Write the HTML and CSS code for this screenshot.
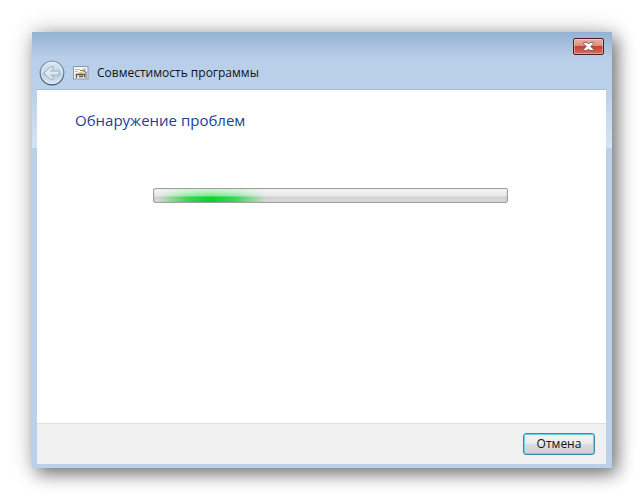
FILE: index.html
```html
<!DOCTYPE html>
<html lang="ru">
<head>
<meta charset="utf-8">
<meta name="viewport" content="width=device-width, initial-scale=1">
<title>Совместимость программы</title>
<link rel="stylesheet" href="styles.css">
</head>
<body>
<main class="window">
  <header class="titlebar">
    <div class="controls">
      <button class="close" type="button" aria-label="Закрыть">
        <svg width="11" height="9" viewBox="0 0 11 9" aria-hidden="true">
          <path d="M.5.5H4L5.500 2 7 .5h3.500v1.200L7.800 4.500l2.700 2.800v1.200H7L5.500 7 4 8.500H.5V7.300L3.200 4.500.5 1.700z" fill="#fff" stroke="#6b4a52" stroke-width=".8"/>
        </svg>
      </button>
    </div>
    <div class="nav">
      <button class="back" type="button" aria-label="Назад" disabled>
        <svg width="26" height="26" viewBox="0 0 26 26" aria-hidden="true">
          <defs>
            <linearGradient id="disc" x1="0" y1="0" x2="0" y2="1">
              <stop offset="0" stop-color="#dbe7f2"/>
              <stop offset=".48" stop-color="#c7d8e8"/>
              <stop offset=".52" stop-color="#b4cadf"/>
              <stop offset="1" stop-color="#dce9f5"/>
            </linearGradient>
            <linearGradient id="rim" x1="0" y1="0" x2="0" y2="1">
              <stop offset="0" stop-color="#8c9dae"/>
              <stop offset="1" stop-color="#3f5164"/>
            </linearGradient>
          </defs>
          <circle cx="13" cy="13" r="11.8" fill="url(#disc)" stroke="url(#rim)" stroke-width="1.2"/>
          <circle cx="13" cy="13" r="10.6" fill="none" stroke="#eaf2f9" stroke-opacity=".7"/>
          <path d="M4.800 13l7-6.300h2.400v2L11.700 11H20v4h-8.300l2.500 2.300v2h-2.400z" fill="#dfe9f2" stroke="#9aafc4" stroke-width="1" stroke-linejoin="round"/>
        </svg>
      </button>
      <svg class="app-icon" width="16" height="14" viewBox="0 0 16 14" aria-hidden="true">
        <rect x=".5" y=".5" width="14.500" height="12.500" fill="#f4f4f1" stroke="#8b98a8"/>
        <path d="M2 3.500h5M2 5.500h3" stroke="#b9bcc6"/>
        <path d="M9 2.500h4v4z" fill="#cdb2dc"/>
        <path d="M7 4.500h3l3 2v4" fill="none" stroke="#77717f" stroke-width="1.200"/>
        <path d="M4 8l2-2h4l1 2z" fill="#e9d264"/>
        <path d="M2.500 8.500h9v3M3.500 9v3M6 10.500h4" fill="none" stroke="#5c5a56" stroke-width="1.300"/>
        <path d="M12 10h2v2h-2z" fill="#bba8a0"/>
      </svg>
      <span class="title">Совместимость программы</span>
    </div>
  </header>
  <section class="client">
    <div class="content">
      <h1 class="heading" id="status">Обнаружение проблем</h1>
      <div class="progress" role="progressbar" aria-labelledby="status"></div>
    </div>
    <footer class="footer">
      <button class="cancel" type="button">Отмена</button>
    </footer>
  </section>
</main>
</body>
</html>
```
FILE: styles.css
```css
* {
  box-sizing: border-box;
}

body {
  display: flex;
  min-height: 100vh;
  margin: 0;
  padding: 32px;
  background: #fff;
  color: #111;
  font: 12px/16px "Open Sans", "Noto Sans", sans-serif;
}

.window {
  display: flex;
  flex: 1;
  flex-direction: column;
  padding: 0 6px 4px 5px;
  background:
    linear-gradient(#bad0e9, #d5e4f4) 0 58px / 100% 58px no-repeat,
    linear-gradient(#94b2d2, #b9cfe9 26px, #bad1ea 58px, #b9d1ea);
  box-shadow: 5px 6px 16px rgba(0, 0, 0, .48), 0 0 24px rgba(0, 0, 0, .2);
}

.controls {
  display: flex;
  justify-content: flex-end;
  padding: 6px 2px 0 0;
}

.close {
  display: grid;
  place-items: center;
  width: 31px;
  height: 17px;
  padding: 0;
  border: 1px solid #4c1e26;
  border-radius: 2px;
  background: linear-gradient(#eab0a5, #dc8a7e 48%, #c04535 50%, #d47060);
  box-shadow: inset 0 0 0 1px rgba(255, 220, 210, .45);
}

.nav {
  display: flex;
  align-items: center;
  height: 34px;
  padding: 1px 0 0 2px;
}

.back {
  width: 26px;
  height: 26px;
  padding: 0;
  border: 0;
  background: none;
}

.back svg,
.close svg {
  display: block;
}

.app-icon {
  margin: 0 8px;
}

.client {
  display: flex;
  flex: 1;
  flex-direction: column;
  border-top: 1px solid #a9bed6;
  background: #fff;
}

.content {
  flex: 1;
  padding: 18px 38px;
}

.heading {
  margin: 0;
  color: #1c3f94;
  font-size: 15px;
  font-weight: 400;
  line-height: 24px;
}

.progress {
  height: 15px;
  margin: 56px 60px 0 78px;
  border: 1px solid #a0a0a0;
  border-radius: 2px;
  background:
    linear-gradient(rgba(255, 255, 255, .85), rgba(255, 255, 255, .45) 7px, transparent 8px),
    linear-gradient(90deg, rgba(8, 212, 44, 0) 4px, rgba(8, 212, 44, .75) 34px, #08d42c 57px, rgba(8, 212, 44, .75) 80px, rgba(8, 212, 44, 0) 112px),
    linear-gradient(#d2d2d2, #d2d2d2 9px, #dedede);
  box-shadow: inset 0 0 2px rgba(0, 0, 0, .15);
}

.footer {
  display: flex;
  justify-content: flex-end;
  padding: 9px 11px;
  border-top: 1px solid #dfdfdf;
  background: #f0f0f0;
}

.cancel {
  width: 72px;
  height: 22px;
  padding: 0;
  border: 1px solid #348cad;
  border-radius: 3px;
  background: linear-gradient(#f3f3f3, #ebebeb 48%, #dddddd 50%, #cfcfcf);
  box-shadow: inset 0 0 0 1px #6fd0ee;
  color: #111;
  font: inherit;
}
```
